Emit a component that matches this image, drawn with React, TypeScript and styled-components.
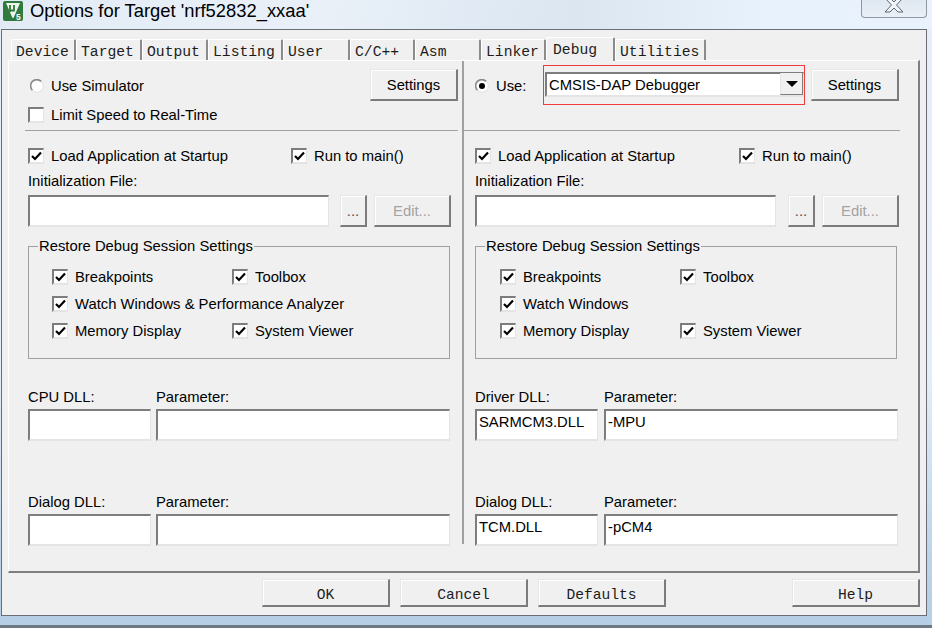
import React from "react";
import styled, { createGlobalStyle } from "styled-components";

const GlobalStyle = createGlobalStyle`
  html, body {
    margin: 0;
    padding: 0;
    width: 932px;
    height: 628px;
    overflow: hidden;
  }
  * {
    box-sizing: border-box;
  }
`;

const sunken = `
  background: #fff;
  border-style: solid;
  border-width: 2px 1px 2px 2px;
  border-color: #7d7d7d #e4e4e4 #e4e4e4 #7d7d7d;
`;

const Window = styled.div`
  width: 932px;
  height: 628px;
  display: flex;
  flex-direction: column;
  font-family: "Liberation Sans", Arial, sans-serif;
  font-size: 14.8px;
  color: #000;
  background: linear-gradient(180deg, #e7eff8 0%, #e4eef8 60%, #bcd3e8 90%, #b6cfe6 100%);
  border-bottom: 3px solid #6c7884;
`;

const TitleBar = styled.header`
  height: 29px;
  flex: none;
  display: flex;
  align-items: flex-start;
  padding-left: 3px;
  background: linear-gradient(100deg, #e2ebf5 0%, #e9f0f8 35%, #dbe6f1 62%, #e8f2fc 82%, #eaf3fd 100%);
`;

const LogoIcon = styled.svg`
  flex: none;
  margin-top: 1px;
`;

const TitleText = styled.h1`
  margin: 0 0 0 7px;
  font-size: 18.37px;
  font-weight: 400;
  line-height: 21px;
`;

const CloseButton = styled.div`
  margin-left: auto;
  margin-right: 5px;
  width: 66px;
  height: 18px;
  display: flex;
  justify-content: center;
  border: 1px solid #8e97a3;
  border-top: none;
  border-radius: 0 0 4px 4px;
  background: linear-gradient(180deg, #dfe7f0, #eaf0f7);
`;

const Client = styled.div`
  margin: 0 5px 0 1px;
  height: 587px;
  flex: none;
  background: #f0f0f0;
  border: 1px solid #696e74;
`;

const TabStrip = styled.nav`
  height: 30px;
  padding-left: 9px;
  display: flex;
  align-items: flex-end;
`;

const Tab = styled.div<{ $width: number; $active?: boolean }>`
  width: ${(p) => p.$width}px;
  height: ${(p) => (p.$active ? 24 : 21)}px;
  margin-bottom: ${(p) => (p.$active ? -1 : 0)}px;
  padding: ${(p) => (p.$active ? "4px 0 0 6px" : "4px 0 0 4px")};
  position: relative;
  z-index: ${(p) => (p.$active ? 1 : 0)};
  flex: none;
  background: #f0f0f0;
  border-top: 1px solid #fff;
  border-left: 1px solid #fff;
  border-right: 2px solid #8b8b8b;
  border-radius: 2px 2px 0 0;
  font-family: "Liberation Mono", monospace;
  font-size: 14.7px;
  line-height: 17px;
  color: #1c1c1c;
  white-space: pre;
`;

const TabPanel = styled.section`
  margin-left: 6px;
  width: 912px;
  height: 513px;
  display: grid;
  grid-template-columns: 453px 2px 1fr;
  align-items: start;
  background: #f0f0f0;
  border-top: 1px solid #fff;
  border-left: 1px solid #fff;
  border-right: 2px solid #7f7f7f;
  border-bottom: 2px solid #7f7f7f;
`;

const VerticalRule = styled.div`
  height: 483px;
  background: #a0a0a0;
`;

const PaneColumn = styled.div<{ $inset: number }>`
  padding-left: ${(p) => p.$inset}px;
`;

const TopSection = styled.div<{ $left: number; $right: number }>`
  height: 70px;
  margin-left: -${(p) => p.$left}px;
  margin-right: ${(p) => p.$right}px;
  padding: 8px 0 0 ${(p) => p.$left}px;
  display: flex;
  align-items: flex-start;
  border-bottom: 1px solid #a0a0a0;
`;

const SourceColumn = styled.div`
  flex: 1;
  padding-top: 2px;
`;

const ChoiceRow = styled.label`
  height: 29px;
  display: flex;
  align-items: center;
  gap: 7px;
`;

const RadioRow = styled(ChoiceRow)<{ $inset: number }>`
  margin-left: ${(p) => p.$inset}px;
`;

const RadioIcon = styled.svg`
  flex: none;
`;

const CheckFrame = styled.span`
  ${sunken}
  width: 16px;
  height: 16px;
  flex: none;
  display: flex;
  align-items: center;
  justify-content: center;
`;

const RaisedButton = styled.button<{ $width: number; $height?: number; $gap?: number; $tone?: string }>`
  width: ${(p) => p.$width}px;
  height: ${(p) => p.$height ?? 32}px;
  margin-left: ${(p) => p.$gap ?? 0}px;
  flex: none;
  padding: 0;
  background: #f0f0f0;
  border-style: solid;
  border-width: 1px 2px 2px 1px;
  border-color: #e6e6e6 #7b7b7b #7b7b7b #e6e6e6;
  box-shadow: inset 1px 1px 0 #fff;
  font: inherit;
  color: ${(p) => p.$tone ?? "#000"};
`;

const UseRow = styled.div`
  flex: none;
  width: 70px;
  padding-top: 2px;
`;

const Combo = styled.div`
  ${sunken}
  position: relative;
  width: 259px;
  height: 25px;
  margin-top: 3px;
  display: flex;
  justify-content: space-between;
  padding-left: 2px;
  line-height: 23px;
  &::after {
    content: "";
    position: absolute;
    top: -9px;
    left: -4px;
    right: -2px;
    bottom: -10px;
    border: 1px solid #ee3b3b;
  }
`;

const ComboArrow = styled.span`
  width: 23px;
  height: 22px;
  margin-top: -1px;
  display: flex;
  align-items: center;
  justify-content: center;
  background: #f0f0f0;
  border-left: 1px solid #e4e4e4;
  border-right: 1px solid #7d7d7d;
  border-bottom: 1px solid #7d7d7d;
  &::before {
    content: "";
    border-style: solid;
    border-width: 6px 6px 0;
    border-color: #000 transparent transparent;
  }
`;

const StartRow = styled.div<{ $first: number }>`
  margin-top: 16px;
  height: 18px;
  display: grid;
  grid-template-columns: ${(p) => p.$first}px auto;
  justify-content: start;
`;

const InlineCheck = styled.label`
  display: flex;
  align-items: center;
  gap: 7px;
  line-height: 18px;
  white-space: nowrap;
`;

const FieldLabel = styled.div`
  height: 18px;
  line-height: 18px;
  white-space: nowrap;
`;

const InitLabel = styled(FieldLabel)`
  margin-top: 7px;
`;

const FileRow = styled.div`
  margin-top: 5px;
  display: flex;
  align-items: flex-start;
`;

const TextBox = styled.div<{ $width: number }>`
  ${sunken}
  width: ${(p) => p.$width}px;
  height: 32px;
  flex: none;
  padding-left: 2px;
  line-height: 22px;
  white-space: nowrap;
`;

const RestoreGroup = styled.fieldset<{ $width: number }>`
  width: ${(p) => p.$width}px;
  height: 122px;
  margin: 10px 0 0;
  padding: 8px 0 0;
  border: 1px solid #a0a0a0;
  min-inline-size: 0;
`;

const GroupTitle = styled.legend`
  margin-left: 9px;
  padding: 0 1px;
  line-height: 18px;
`;

const OptionGrid = styled.div<{ $inset: number }>`
  margin-left: ${(p) => p.$inset}px;
  display: grid;
  grid-template-columns: 180px auto;
  grid-auto-rows: 27px;
  justify-content: start;
  align-items: center;
`;

const WideOption = styled(InlineCheck)`
  grid-column: 1 / -1;
`;

const DllGrid = styled.div<{ $gap: number }>`
  margin-top: 29px;
  display: grid;
  grid-template-columns: 123px 294px;
  column-gap: ${(p) => p.$gap}px;
  grid-template-rows: 18px 32px 55px 18px 32px;
  justify-content: start;
`;

const DllBox = styled(TextBox)`
  width: 100%;
  margin-top: 3px;
`;

const DllSpacer = styled.div`
  grid-column: 1 / -1;
`;

const Footer = styled.footer`
  height: 42px;
  padding: 6px 6px 0 260px;
  display: flex;
  align-items: flex-start;
  gap: 10px;
`;

const FooterButton = styled(RaisedButton)`
  padding-top: 4px;
  font-family: "Liberation Mono", monospace;
  font-size: 14.6px;
  color: #1c1c1c;
`;

const HelpButton = styled(FooterButton)`
  margin-left: auto;
`;

const Check = () => (
  <CheckFrame>
    <svg width="11" height="10" viewBox="0 0 11 10">
      <path d="M1 5 L4 8 L10 1.5" fill="none" stroke="#000" strokeWidth="2.2" />
    </svg>
  </CheckFrame>
);

const Radio = ({ on }: { on?: boolean }) => (
  <RadioIcon width="14" height="14" viewBox="0 0 14 14">
    <circle cx="7" cy="7" r="6" fill="#fff" />
    <path d="M2.4 11.2 A6 6 0 0 1 11.2 2.4" fill="none" stroke="#8a8a8a" strokeWidth="1.6" />
    <path d="M11.6 2.8 A6 6 0 0 1 2.8 11.6" fill="none" stroke="#e8e8e8" strokeWidth="1.4" />
    {on && <circle cx="7" cy="7" r="3" fill="#000" />}
  </RadioIcon>
);

const KeilLogo = () => (
  <LogoIcon width="20" height="20" viewBox="0 0 20 20">
    <rect width="20" height="20" rx="2" fill="#2f7a3c" />
    <path d="M3 2 H17 L10.5 17 H9.5 Z" fill="#eef5ea" />
    <path d="M7 4 V11 M7 9.5 H11 M11 4 V10.5" fill="none" stroke="#2f7a3c" strokeWidth="1.8" />
    <text x="13" y="18.5" fontSize="8.5" fontWeight="700" fill="#fff" fontFamily="Liberation Sans, sans-serif">
      5
    </text>
  </LogoIcon>
);

type PaneProps = {
  inset: number;
  checkFirst: number;
  fileGap: number;
  optionInset: number;
  watchLabel: string;
  dllGap: number;
  driverLabel: string;
  driver: string;
  driverParam: string;
  dialog: string;
  dialogParam: string;
  top: React.ReactNode;
  topLeft: number;
  topRight: number;
};

const Pane = (p: PaneProps) => (
  <PaneColumn $inset={p.inset}>
    <TopSection $left={p.topLeft} $right={p.topRight}>
      {p.top}
    </TopSection>
    <StartRow $first={p.checkFirst}>
      <InlineCheck>
        <Check />
        Load Application at Startup
      </InlineCheck>
      <InlineCheck>
        <Check />
        Run to main()
      </InlineCheck>
    </StartRow>
    <InitLabel>Initialization File:</InitLabel>
    <FileRow>
      <TextBox $width={301} />
      <RaisedButton $width={27} $gap={p.fileGap} $tone="#555">
        ...
      </RaisedButton>
      <RaisedButton $width={77} $gap={7} $tone="#a3a3a3">
        Edit...
      </RaisedButton>
    </FileRow>
    <RestoreGroup $width={422}>
      <GroupTitle>Restore Debug Session Settings</GroupTitle>
      <OptionGrid $inset={p.optionInset}>
        <InlineCheck>
          <Check />
          Breakpoints
        </InlineCheck>
        <InlineCheck>
          <Check />
          Toolbox
        </InlineCheck>
        <WideOption>
          <Check />
          {p.watchLabel}
        </WideOption>
        <InlineCheck>
          <Check />
          Memory Display
        </InlineCheck>
        <InlineCheck>
          <Check />
          System Viewer
        </InlineCheck>
      </OptionGrid>
    </RestoreGroup>
    <DllGrid $gap={p.dllGap}>
      <FieldLabel>{p.driverLabel}</FieldLabel>
      <FieldLabel>Parameter:</FieldLabel>
      <DllBox $width={123}>{p.driver}</DllBox>
      <DllBox $width={294}>{p.driverParam}</DllBox>
      <DllSpacer />
      <FieldLabel>Dialog DLL:</FieldLabel>
      <FieldLabel>Parameter:</FieldLabel>
      <DllBox $width={123}>{p.dialog}</DllBox>
      <DllBox $width={294}>{p.dialogParam}</DllBox>
    </DllGrid>
  </PaneColumn>
);

const tabs = [
  { label: "Device", width: 65 },
  { label: "Target", width: 66 },
  { label: "Output", width: 66 },
  { label: "Listing", width: 75 },
  { label: "User", width: 67 },
  { label: "C/C++", width: 65 },
  { label: "Asm", width: 66 },
  { label: "Linker", width: 65 },
  { label: "Debug", width: 69, active: true },
  { label: "Utilities", width: 91 },
];

export default function App() {
  return (
    <>
      <GlobalStyle />
      <Window>
        <TitleBar>
          <KeilLogo />
          <TitleText>Options for Target 'nrf52832_xxaa'</TitleText>
          <CloseButton>
            <svg width="24" height="13" viewBox="0 0 24 13">
              <path
                d="M3 -2 H8 L12 2 L16 -2 H21 L14.5 5 L21 12 H16 L12 8 L8 12 H3 L9.5 5 Z"
                fill="#f1f4f8"
                stroke="#5f6772"
                strokeWidth="1"
              />
            </svg>
          </CloseButton>
        </TitleBar>
        <Client>
          <TabStrip>
            {tabs.map((t) => (
              <Tab key={t.label} $width={t.width} $active={t.active}>
                {t.label}
              </Tab>
            ))}
          </TabStrip>
          <TabPanel>
            <Pane
              inset={19}
              checkFirst={263}
              fileGap={11}
              optionInset={23}
              watchLabel="Watch Windows & Performance Analyzer"
              dllGap={5}
              driverLabel="CPU DLL:"
              driver=""
              driverParam=""
              dialog=""
              dialogParam=""
              topLeft={3}
              topRight={4}
              top={
                <>
                  <SourceColumn>
                    <RadioRow $inset={2}>
                      <Radio />
                      Use Simulator
                    </RadioRow>
                    <ChoiceRow>
                      <CheckFrame />
                      Limit Speed to Real-Time
                    </ChoiceRow>
                  </SourceColumn>
                  <RaisedButton $width={88}>Settings</RaisedButton>
                </>
              }
            />
            <VerticalRule />
            <Pane
              inset={11}
              checkFirst={264}
              fileGap={12}
              optionInset={24}
              watchLabel="Watch Windows"
              dllGap={6}
              driverLabel="Driver DLL:"
              driver="SARMCM3.DLL"
              driverParam="-MPU"
              dialog="TCM.DLL"
              dialogParam="-pCM4"
              topLeft={11}
              topRight={18}
              top={
                <>
                  <UseRow>
                    <RadioRow $inset={0}>
                      <Radio on />
                      Use:
                    </RadioRow>
                  </UseRow>
                  <Combo>
                    CMSIS-DAP Debugger
                    <ComboArrow />
                  </Combo>
                  <RaisedButton $width={88} $gap={7}>
                    Settings
                  </RaisedButton>
                </>
              }
            />
          </TabPanel>
          <Footer>
            <FooterButton $width={128} $height={28}>
              OK
            </FooterButton>
            <FooterButton $width={128} $height={28}>
              Cancel
            </FooterButton>
            <FooterButton $width={128} $height={28}>
              Defaults
            </FooterButton>
            <HelpButton $width={128} $height={28}>
              Help
            </HelpButton>
          </Footer>
        </Client>
      </Window>
    </>
  );
}
